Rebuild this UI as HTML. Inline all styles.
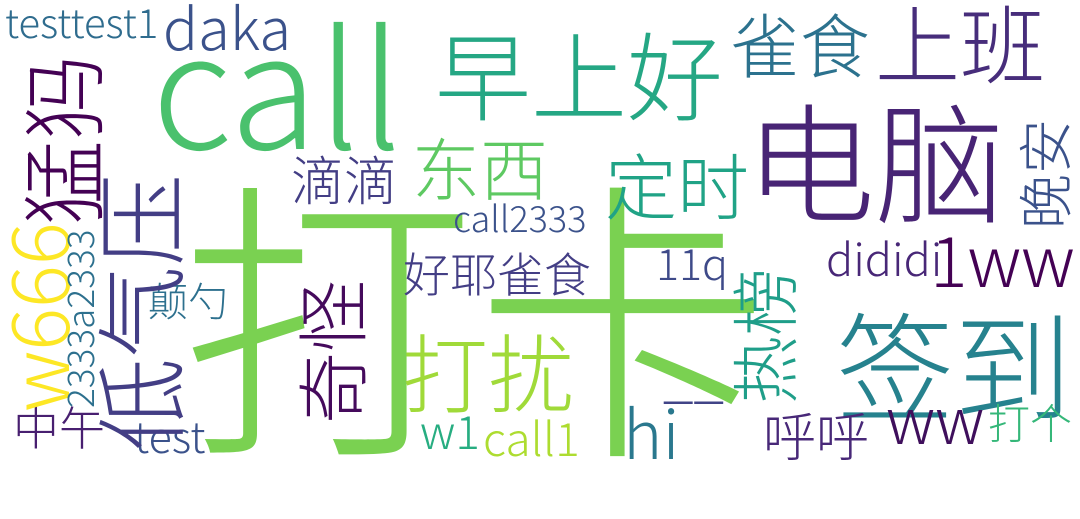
<!DOCTYPE html>
<html><head><meta charset="utf-8"><style>
html,body{margin:0;padding:0;background:#fff;}
body{width:1080px;height:463px;position:relative;overflow:hidden;font-family:"Noto Sans CJK SC Light","Noto Sans CJK SC","Liberation Sans",sans-serif;font-weight:300;}
.w{position:absolute;line-height:1;white-space:nowrap;}
.r{transform:rotate(-90deg);transform-origin:0 0;}
</style></head><body>
<div class="w" style="left:180px;top:158px;font-size:295px;color:#7ad151">打卡</div>
<div class="w" style="left:152px;top:0px;font-size:160px;color:#4ac16d">call</div>
<div class="w" style="left:5px;top:1px;font-size:40px;color:#2f6c8e">testtest1</div>
<div class="w" style="left:163px;top:-4px;font-size:58px;color:#3b528b">daka</div>
<div class="w" style="left:435px;top:24px;font-size:96px;color:#25a784">早上好</div>
<div class="w" style="left:730px;top:8px;font-size:70px;color:#2c728e">雀食</div>
<div class="w" style="left:875px;top:-2px;font-size:85px;color:#472d7b">上班</div>
<div class="w" style="left:745px;top:92px;font-size:130px;color:#482475">电脑</div>
<div class="w" style="left:412px;top:132px;font-size:68px;color:#5ec962">东西</div>
<div class="w" style="left:291px;top:152px;font-size:53px;color:#433e85">滴滴</div>
<div class="w" style="left:605px;top:147px;font-size:72px;color:#20a386">定时</div>
<div class="w" style="left:453px;top:199px;font-size:36px;color:#3b528b">call2333</div>
<div class="w" style="left:930px;top:223px;font-size:70px;color:#440154">1ww</div>
<div class="w" style="left:826px;top:234px;font-size:45px;color:#482777">dididi</div>
<div class="w" style="left:403px;top:248px;font-size:47px;color:#433e85">好耶雀食</div>
<div class="w" style="left:656px;top:241px;font-size:43px;color:#3e4a89">11q</div>
<div class="w" style="left:148px;top:279px;font-size:40px;color:#2d708e">颠勺</div>
<div class="w" style="left:402px;top:326px;font-size:86px;color:#a0da39">打扰</div>
<div class="w" style="left:836px;top:302px;font-size:118px;color:#26828e">签到</div>
<div class="w" style="left:763px;top:408px;font-size:53px;color:#482878">呼呼</div>
<div class="w" style="left:886px;top:385px;font-size:64px;color:#3f0f5c">ww</div>
<div class="w" style="left:988px;top:401px;font-size:42px;color:#35b779">打个</div>
<div class="w" style="left:623px;top:397px;font-size:67px;color:#2a788e">hi</div>
<div class="w" style="left:420px;top:407px;font-size:46px;color:#27ad81">w1</div>
<div class="w" style="left:483px;top:414px;font-size:46px;color:#addc30">call1</div>
<div class="w" style="left:134px;top:414px;font-size:43px;color:#3b528b">test</div>
<div class="w" style="left:13px;top:403px;font-size:46px;color:#481f70">中午</div>
<div class="w" style="left:663px;top:346px;font-size:55px;color:#414487">__</div>
<div class="w r" style="left:17px;top:225px;font-size:85px;color:#440154">猛犸</div>
<div class="w r" style="left:91px;top:450px;font-size:92px;color:#433e85">低气压</div>
<div class="w r" style="left:293px;top:424px;font-size:72px;color:#450a5c">奇怪</div>
<div class="w r" style="left:728px;top:404px;font-size:68px;color:#1f9e89">热榜</div>
<div class="w r" style="left:1015px;top:229px;font-size:55px;color:#3b528b">晚安</div>
<div class="w r" style="left:-5px;top:412px;font-size:80px;color:#fde725">w666</div>
<div class="w r" style="left:60px;top:408px;font-size:37px;color:#2d708e">2333a2333</div>
</body></html>
